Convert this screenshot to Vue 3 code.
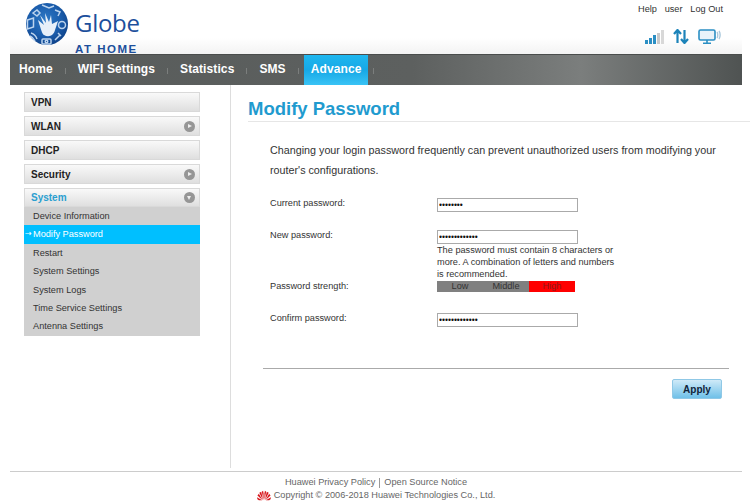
<script setup>
const navItems = [
  { label: 'Home' },
  { label: 'WIFI Settings' },
  { label: 'Statistics' },
  { label: 'SMS' },
  { label: 'Advance', active: true }
]

const menu = [
  { label: 'VPN' },
  { label: 'WLAN', arrow: 'right' },
  { label: 'DHCP' },
  { label: 'Security', arrow: 'right' }
]

const subItems = [
  'Device Information',
  'Modify Password',
  'Restart',
  'System Settings',
  'System Logs',
  'Time Service Settings',
  'Antenna Settings'
]
</script>

<template>
  <div class="page">
    <header class="top">
      <div class="brand">
        <svg class="globe" width="42" height="44" viewBox="0 0 42 44">
          <defs>
            <radialGradient id="ball" cx="0.45" cy="0.4" r="0.65">
              <stop offset="0" stop-color="#2e79c6" />
              <stop offset="0.6" stop-color="#1a5cab" />
              <stop offset="1" stop-color="#0d3f85" />
            </radialGradient>
          </defs>
          <circle cx="21" cy="22" r="21" fill="url(#ball)" />
          <path d="M12 18l6 5-4-10 6 8-1-10 4 9 2-7 1 9 6-3-3 9c-1 5-6 8-11 5-2-1-3-6-6-15z" fill="#e8f0f9" />
          <g fill="none" stroke="#bcd4ee" stroke-width="1.5">
            <path d="M1.500 18l6-2v9l-6 2z" />
            <path d="M16 3l7 3 5-2" />
            <path d="M7 11l4-3 3 3-3 3z" />
            <path d="M29 8l5 2-2 4" />
            <circle cx="36" cy="23" r="3.500" />
            <path d="M5 31c3 1 5 3 6 6M4 34c2 1 4 3 5 5" />
            <rect x="16" y="37" width="9" height="5" rx="1" />
            <circle cx="20.500" cy="39.500" r="1.300" />
            <path d="M29 38l5-5M32 31l3 3" />
          </g>
        </svg>
        <div class="brand-text">
          <span class="brand-name">Globe</span>
          <span class="brand-sub">AT HOME</span>
        </div>
      </div>
      <div class="top-right">
        <div class="links">
          <span>Help</span>
          <span>user</span>
          <span>Log Out</span>
        </div>
        <div class="status">
          <svg width="19" height="14" viewBox="0 0 19 14">
            <rect x="0" y="10" width="3" height="4" fill="#2b8fc4" />
            <rect x="4" y="8" width="3" height="6" fill="#2b8fc4" />
            <rect x="8" y="5" width="3" height="9" fill="#2b8fc4" />
            <rect x="12" y="3" width="3" height="11" fill="#c9c9c9" />
            <rect x="16" y="0" width="3" height="14" fill="#d8d8d8" />
          </svg>
          <svg width="16" height="15" viewBox="0 0 16 15">
            <path d="M4.500 14V2M1 5l3.500-4L8 5M11.500 1v12M8 10l3.500 4 3.500-4" fill="none" stroke="#1c83b9" stroke-width="2.200" />
          </svg>
          <svg width="23" height="15" viewBox="0 0 23 15">
            <rect x="1" y="1" width="16" height="10" rx="1.500" fill="#e8f3fa" stroke="#2b8fc4" stroke-width="1.600" />
            <path d="M9 11v3M5 14.200h8" stroke="#2b8fc4" stroke-width="1.600" />
            <path d="M19 3c1 1 1 5 0 6M21 2c1.500 2 1.500 6 0 8" fill="none" stroke="#a9c8dc" stroke-width="1.400" />
          </svg>
        </div>
      </div>
    </header>

    <nav class="nav">
      <template v-for="item in navItems" :key="item.label">
        <a class="nav-item" :class="{ active: item.active }">{{ item.label }}</a>
        <span class="nav-sep"></span>
      </template>
    </nav>

    <div class="main">
      <aside class="side">
        <div v-for="m in menu" :key="m.label" class="menu-head">
          <span>{{ m.label }}</span>
          <i v-if="m.arrow" class="dot right"></i>
        </div>
        <div class="menu-head open">
          <span>System</span>
          <i class="dot down"></i>
        </div>
        <ul class="sub">
          <li v-for="s in subItems" :key="s" :class="{ current: s === 'Modify Password' }">{{ s }}</li>
        </ul>
      </aside>

      <section class="content">
        <h1>Modify Password</h1>
        <div class="body">
          <p class="intro">Changing your login password frequently can prevent unauthorized users from modifying your router's configurations.</p>

          <div class="row first">
            <label>Current password:</label>
            <input type="password" value="12345678" />
          </div>
          <div class="row second">
            <label>New password:</label>
            <div class="field">
              <input type="password" value="1234567890123" />
              <p class="hint">The password must contain 8 characters or more. A combination of letters and numbers is recommended.</p>
            </div>
          </div>
          <div class="row strength-row">
            <label>Password strength:</label>
            <div class="strength">
              <span>Low</span>
              <span>Middle</span>
              <span class="high">High</span>
            </div>
          </div>
          <div class="row confirm">
            <label>Confirm password:</label>
            <input type="password" value="1234567890123" />
          </div>

          <div class="actions">
            <button type="button">Apply</button>
          </div>
        </div>
      </section>
    </div>

    <footer class="foot">
      <div class="foot-links">
        <span>Huawei Privacy Policy</span>
        <span class="bar"></span>
        <span>Open Source Notice</span>
      </div>
      <div class="foot-copy">
        <svg width="14" height="11" viewBox="0 0 15 11">
          <g fill="#d7141a">
            <path d="M7 10.500L5.200 1.500 6.500 0.500 7 3z" />
            <path d="M8 10.500L9.800 1.500 8.500 0.500 8 3z" />
            <path d="M6.500 10.500L2.500 2.500 4.500 1.500z" />
            <path d="M8.500 10.500L12.500 2.500 10.500 1.500z" />
            <path d="M6 10.500L0.500 5.500 2 3.500z" />
            <path d="M9 10.500L14.500 5.500 13 3.500z" />
            <path d="M5.500 10.500L0 7.500 0.500 9.500 2 10.500z" />
            <path d="M9.500 10.500L15 7.500 14.500 9.500 13 10.500z" />
          </g>
        </svg>
        <span>Copyright © 2006-2018 Huawei Technologies Co., Ltd.</span>
      </div>
    </footer>
  </div>
</template>

<style>
html, body {
  margin: 0;
  background: #fff;
}
</style>

<style scoped>
.page {
  width: 750px;
  height: 502px;
  overflow: hidden;
  font-family: "Liberation Sans", Arial, sans-serif;
  font-size: 9.2px;
  color: #333;
  background: #fff;
}

.top {
  height: 54px;
  margin: 0 8px 0 10px;
  display: flex;
  justify-content: space-between;
  background: linear-gradient(#fff 70%, #f3f3f3);
}

.brand {
  display: flex;
  padding: 2px 0 0 16px;
  gap: 7px;
}

.brand-text {
  display: flex;
  flex-direction: column;
}

.brand-name {
  font-family: "Open Sans", sans-serif;
  font-size: 24px;
  line-height: 30px;
  margin-top: 6px;
  color: #1c4f9c;
  letter-spacing: -0.3px;
}

.brand-sub {
  font-size: 11.500px;
  font-weight: bold;
  line-height: 12px;
  margin-top: 5px;
  color: #1c4f9c;
  letter-spacing: 1.500px;
}

.top-right {
  width: 85px;
  padding-right: 19px;
}

.links {
  display: flex;
  justify-content: space-between;
  padding-top: 4px;
  line-height: 11px;
}

.status {
  display: flex;
  align-items: center;
  gap: 9px;
  margin-top: 14px;
  padding-left: 7px;
  width: 90px;
}

.nav {
  height: 31px;
  margin: 0 8px 0 10px;
  display: flex;
  align-items: stretch;
  padding-left: 9px;
  background: linear-gradient(90deg, #585c5b, #5d605f 55%, #7b7e7d 78%, #4f5352);
  border-top: 1px solid #4a4d4c;
  box-sizing: border-box;
}

.nav-item {
  font-size: 12px;
  font-weight: bold;
  line-height: 29px;
  letter-spacing: 0.1px;
  color: #fff;
}

.nav-item.active {
  margin: 0 -7px;
  padding: 0 7px;
  background: linear-gradient(#1fb7ef, #16a8e6 50%, #39c3f5);
}

.nav-sep {
  width: 1px;
  height: 6px;
  margin: 13px 12px 0;
  background: #7b7e7d;
}

.main {
  display: flex;
  height: 383px;
  padding-left: 24px;
}

.side {
  width: 176px;
  padding-top: 7px;
}

.menu-head {
  height: 20px;
  margin-bottom: 4px;
  padding: 0 4px 0 6px;
  box-sizing: border-box;
  display: flex;
  justify-content: space-between;
  align-items: center;
  border: 1px solid #d9d9d9;
  background: linear-gradient(#f9f9f9, #dfdfdf);
  font-size: 10px;
  font-weight: bold;
  color: #222;
}

.menu-head.open {
  height: 19px;
  margin-bottom: 0;
  color: #2a9fd0;
}

.dot {
  width: 11px;
  height: 11px;
  border-radius: 50%;
  background: #969696;
  position: relative;
}

.dot::after {
  content: "";
  position: absolute;
  width: 0;
  height: 0;
}

.dot.right::after {
  left: 4px;
  top: 3px;
  border-left: 4px solid #eee;
  border-top: 2.500px solid transparent;
  border-bottom: 2.500px solid transparent;
}

.dot.down::after {
  left: 3px;
  top: 4px;
  border-top: 4px solid #eee;
  border-left: 2.500px solid transparent;
  border-right: 2.500px solid transparent;
}

.sub {
  list-style: none;
  margin: 0;
  padding: 0;
  background: #d0d0d0;
}

.sub li {
  height: 18.400px;
  line-height: 18.400px;
  padding-left: 9px;
  color: #333;
  position: relative;
}

.sub li.current {
  background: #00bfff;
  color: #fff;
}

.sub li.current::before {
  content: "→";
  position: absolute;
  left: 1px;
  font-family: "DejaVu Sans", sans-serif;
  font-size: 8px;
}

.content {
  width: 520px;
  height: 383px;
  margin-left: 30px;
  border-left: 1px solid #ddd;
  box-sizing: border-box;
}

h1 {
  margin: 0 0 0 17px;
  padding-top: 12px;
  height: 24px;
  font-size: 18.500px;
  line-height: 24px;
  font-weight: bold;
  color: #1f9bcf;
  border-bottom: 1px solid #e6e6e6;
}

.body {
  padding-left: 39px;
}

.intro {
  width: 460px;
  margin: 18px 0 18px;
  font-size: 10.750px;
  line-height: 20px;
  color: #333;
}

.row {
  display: flex;
  align-items: flex-start;
}

.row label {
  width: 167px;
  flex: none;
  line-height: 11px;
}

input {
  display: block;
  width: 141px;
  height: 14px;
  padding: 0 1px;
  box-sizing: border-box;
  border: 1px solid #aaa;
  font-size: 8.500px;
  outline: none;
  background: #fff;
  color: #111;
}

.second {
  margin-top: 18px;
}

.hint {
  width: 180px;
  margin: 0;
  line-height: 12px;
  color: #333;
}

.strength-row {
  margin-top: 1px;
}

.strength {
  width: 138px;
  height: 11px;
  display: flex;
  background: #808080;
  line-height: 11px;
  text-align: center;
}

.strength span {
  flex: 1;
  color: #333;
}

.strength .high {
  background: #ff0000;
  color: #8e1a1a;
}

.confirm {
  margin-top: 21px;
}

.actions {
  margin: 41px 0 0 -7px;
  width: 466px;
  box-sizing: border-box;
  border-top: 1px solid #aaa;
  padding: 10px 7px 0 0;
  display: flex;
  justify-content: flex-end;
}

button {
  width: 50px;
  height: 20px;
  padding: 0;
  border: 1px solid #8fc8e6;
  border-radius: 2px;
  background: linear-gradient(#cfeaf8, #6fc0e8);
  font-family: inherit;
  font-size: 10px;
  font-weight: bold;
  color: #10243a;
}

.foot {
  margin: 3px 8px 0 10px;
  padding-top: 4px;
  border-top: 1px solid #ccc;
  display: flex;
  flex-direction: column;
  align-items: center;
  color: #666;
  line-height: 13px;
}

.foot-links {
  display: flex;
  align-items: center;
  gap: 4px;
}

.bar {
  width: 1px;
  height: 10px;
  background: #999;
}

.foot-copy {
  display: flex;
  align-items: center;
  gap: 3px;
}
</style>
